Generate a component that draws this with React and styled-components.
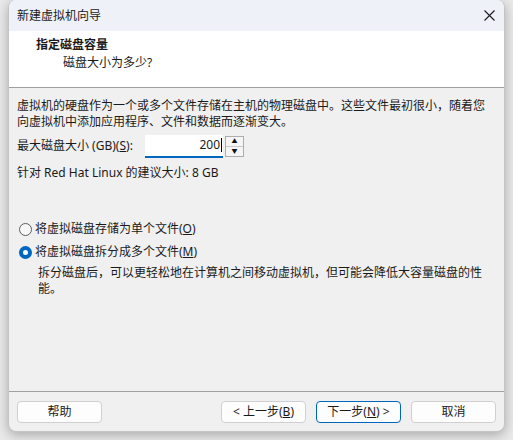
import React from "react";
import styled, { createGlobalStyle } from "styled-components";

const GlobalStyle = createGlobalStyle`
  html, body {
    margin: 0;
    padding: 0;
    background: #e9e9e9;
    font-family: "Noto Sans", "Noto Sans CJK SC", sans-serif;
    font-size: 12px;
    color: #1a1a1a;
  }
`;

function App() {
  return (
    <Page>
      <GlobalStyle />
      <Window>
        <TitleBar>
          <span>新建虚拟机向导</span>
          <CloseButton>
            <svg width="11" height="11" viewBox="0 0 11 11">
              <path d="M0.5 0.5 L10.5 10.5 M10.5 0.5 L0.5 10.5" stroke="#1a1a1a" strokeWidth="1.1" />
            </svg>
          </CloseButton>
        </TitleBar>

        <Header>
          <h3>指定磁盘容量</h3>
          <p>磁盘大小为多少?</p>
        </Header>

        <Body>
          <Paragraph>
            虚拟机的硬盘作为一个或多个文件存储在主机的物理磁盘中。这些文件最初很小，随着您
            <br />
            向虚拟机中添加应用程序、文件和数据而逐渐变大。
          </Paragraph>

          <SizeRow>
            <SizeLabel>
              最大磁盘大小 (GB)(<u>S</u>):
            </SizeLabel>
            <NumberBox>
              <NumberInput>
                200<Caret />
              </NumberInput>
              <Spinner>
                <SpinButton>▲</SpinButton>
                <SpinButton>▼</SpinButton>
              </Spinner>
            </NumberBox>
          </SizeRow>

          <Hint>针对 Red Hat Linux 的建议大小: 8 GB</Hint>

          <RadioRow $first>
            <Radio />
            <span>
              将虚拟磁盘存储为单个文件(<u>O</u>)
            </span>
          </RadioRow>
          <RadioRow>
            <Radio $checked />
            <span>
              将虚拟磁盘拆分成多个文件(<u>M</u>)
            </span>
          </RadioRow>
          <Description>
            拆分磁盘后，可以更轻松地在计算机之间移动虚拟机，但可能会降低大容量磁盘的性
            <br />
            能。
          </Description>
        </Body>

        <Footer>
          <Button>帮助</Button>
          <Spacer />
          <Button>
            &lt; 上一步(<u>B</u>)
          </Button>
          <Button $primary>
            下一步(<u>N</u>) &gt;
          </Button>
          <Button>取消</Button>
        </Footer>
      </Window>
    </Page>
  );
}

const Page = styled.div`
  width: 513px;
  height: 440px;
  padding: 0 8px 0 8px;
  box-sizing: border-box;
  overflow: hidden;
`;

const Window = styled.div`
  width: 497px;
  height: 432px;
  box-sizing: border-box;
  display: flex;
  flex-direction: column;
  background: #f0f0f0;
  border: 1px solid #c4c4c4;
  border-top: none;
  border-radius: 8px;
  overflow: hidden;
  box-shadow: 0 3px 12px rgba(0, 0, 0, 0.28);
`;

const TitleBar = styled.div`
  height: 31px;
  flex: none;
  display: flex;
  align-items: center;
  justify-content: space-between;
  padding: 0 0 0 8px;
  background: #eef2f8;
  line-height: 16px;
`;

const CloseButton = styled.div`
  width: 30px;
  height: 30px;
  display: flex;
  align-items: center;
  justify-content: center;
`;

const Header = styled.div`
  height: 50px;
  flex: none;
  background: #ffffff;
  border-bottom: 1px solid #a0a0a0;
  padding: 6px 0 0 27px;
  box-sizing: content-box;

  h3 {
    margin: 0;
    font-size: 12px;
    line-height: 16px;
    font-weight: 700;
  }

  p {
    margin: 2px 0 0 27px;
    line-height: 16px;
  }
`;

const Body = styled.div`
  flex: 1;
  padding: 10px 8px 0 8px;
  line-height: 16px;
`;

const Paragraph = styled.p`
  margin: 0;
  white-space: nowrap;
`;

const SizeRow = styled.div`
  margin-top: 4px;
  display: flex;
  align-items: center;
  height: 24px;
`;

const SizeLabel = styled.span`
  width: 128px;
`;

const NumberBox = styled.div`
  display: flex;
  align-items: center;
  gap: 2px;
`;

const NumberInput = styled.div`
  width: 78px;
  height: 23px;
  box-sizing: border-box;
  background: #ffffff;
  border-bottom: 2px solid #0067c0;
  display: flex;
  align-items: center;
  justify-content: flex-end;
  padding-right: 1px;
  font-size: 12px;
`;

const Caret = styled.span`
  display: inline-block;
  width: 1px;
  height: 14px;
  background: #000000;
  margin-left: 1px;
`;

const Spinner = styled.div`
  display: flex;
  flex-direction: column;
  width: 17px;
  height: 19px;
  border: 1px solid #adadad;
  background: #f5f5f5;
`;

const SpinButton = styled.div`
  flex: 1;
  display: flex;
  align-items: center;
  justify-content: center;
  font-size: 6px;
  line-height: 6px;
  color: #111111;

  & + & {
    border-top: 1px solid #c8c8c8;
  }
`;

const Hint = styled.div`
  margin-top: 7px;
`;

const RadioRow = styled.div`
  margin-top: ${(p) => (p.$first ? "40px" : "7px")};
  display: flex;
  align-items: center;
  gap: 3px;
  padding-left: 2px;
`;

const Radio = styled.span`
  width: 13px;
  height: 13px;
  box-sizing: border-box;
  border-radius: 50%;
  background: ${(p) => (p.$checked ? "#ffffff" : "#f7f7f7")};
  border: ${(p) => (p.$checked ? "4px solid #0067c0" : "1px solid #5e5e5e")};
`;

const Description = styled.p`
  margin: 5px 0 0 21px;
  white-space: nowrap;
`;

const Footer = styled.div`
  flex: none;
  height: 39px;
  border-top: 1px solid #a0a0a0;
  display: flex;
  align-items: center;
  gap: 10px;
  padding: 0 8px 0 8px;
`;

const Spacer = styled.div`
  flex: 1;
`;

const Button = styled.button`
  width: 85px;
  height: 22px;
  padding: 0;
  font-family: "Noto Sans", "Noto Sans CJK SC", sans-serif;
  font-size: 12px;
  line-height: 16px;
  color: #1a1a1a;
  background: #fdfdfd;
  border: 1px solid ${(p) => (p.$primary ? "#0067c0" : "#d0d0d0")};
  border-radius: 4px;
`;

export default App;
